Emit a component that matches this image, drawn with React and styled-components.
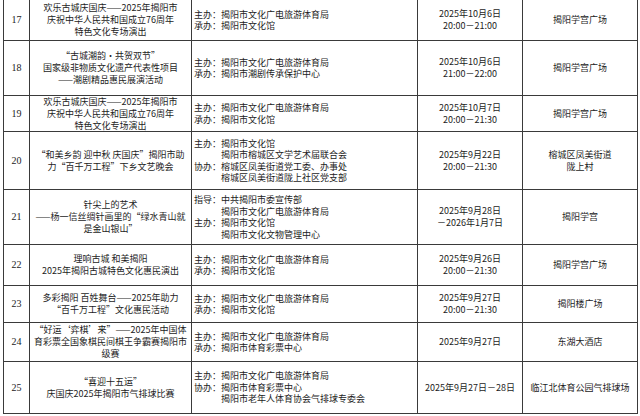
import React from 'react'
import styled, { createGlobalStyle } from 'styled-components'

const GlobalStyle = createGlobalStyle`
  html, body {
    margin: 0;
    padding: 0;
    background: #ffffff;
  }
  body {
    font-family: "Liberation Serif", "Noto Sans CJK SC", serif;
    color: #1a1a1a;
  }
`

const Page = styled.div`
  width: 640px;
  height: 416px;
  overflow: hidden;
  padding-left: 3px;
  box-sizing: border-box;
  background: #fff;
`

const Table = styled.div`
  width: 635px;
  border-left: 1px solid #3a3a3a;
  font-size: 9px;
  font-family: "Noto Sans CJK SC", sans-serif;
  color: #1c1c1c;
`

const Row = styled.div`
  display: grid;
  grid-template-columns: 26px 162px 226px 105px 115px;
  height: ${p => p.h}px;
`

const Cell = styled.div`
  box-sizing: border-box;
  border-right: 1px solid #3a3a3a;
  border-bottom: 1px solid #3a3a3a;
  display: flex;
  flex-direction: column;
  justify-content: center;
  align-items: ${p => (p.left ? 'flex-start' : 'center')};
  text-align: ${p => (p.left ? 'left' : 'center')};
  padding-left: ${p => (p.left ? '2px' : '0')};
  line-height: ${p => p.lh || 12}px;
  white-space: nowrap;
  overflow: hidden;
`

const Num = styled(Cell)`
  font-family: "Liberation Serif", serif;
  font-size: 10px;
`

const Group = styled.div`
  display: flex;
`

const Label = styled.span`
  flex: none;
`

const Names = styled.div`
  display: flex;
  flex-direction: column;
`

const Line = styled.span`
  display: block;
`

const main = ['揭阳市文化广电旅游体育局']

const rows = [
  {
    n: 17, h: 41,
    title: ['欢乐古城庆国庆——2025年揭阳市', '庆祝中华人民共和国成立76周年', '特色文化专场演出'],
    org: [['主办：', main], ['承办：', ['揭阳市文化馆']]],
    date: ['2025年10月6日', '20:00－21:00'],
    place: ['揭阳学宫广场'],
  },
  {
    n: 18, h: 55,
    title: ['“古城潮韵·共贺双节”', '国家级非物质文化遗产代表性项目', '——潮剧精品惠民展演活动'],
    org: [['主办：', main], ['承办：', ['揭阳市潮剧传承保护中心']]],
    date: ['2025年10月6日', '21:00－22:00'],
    place: ['揭阳学宫广场'],
  },
  {
    n: 19, h: 36,
    title: ['欢乐古城庆国庆——2025年揭阳市', '庆祝中华人民共和国成立76周年', '特色文化专场演出'],
    org: [['主办：', main], ['承办：', ['揭阳市文化馆']]],
    date: ['2025年10月7日', '20:00－21:30'],
    place: ['揭阳学宫广场'],
  },
  {
    n: 20, h: 58,
    title: ['“和美乡韵 迎中秋 庆国庆”揭阳市助', '力“百千万工程”下乡文艺晚会'],
    org: [
      ['主办：', ['揭阳市文化馆', '揭阳市榕城区文学艺术届联合会']],
      ['协办：', ['榕城区凤美街道党工委、办事处', '榕城区凤美街道陇上社区党支部']],
    ],
    date: ['2025年9月22日', '20:00－21:30'],
    place: ['榕城区凤美街道', '陇上村'],
  },
  {
    n: 21, h: 55,
    title: ['针尖上的艺术', '——杨一信丝绸针画里的“绿水青山就', '是金山银山”'],
    org: [
      ['指导：', ['中共揭阳市委宣传部', '揭阳市文化广电旅游体育局']],
      ['主办：', ['揭阳市文化馆', '揭阳市文化文物管理中心']],
    ],
    date: ['2025年9月28日', '－2026年1月7日'],
    place: ['揭阳学宫'],
  },
  {
    n: 22, h: 41,
    title: ['理响古城 和美揭阳', '2025年揭阳古城特色文化惠民演出'],
    org: [['主办：', main], ['承办：', ['揭阳市文化馆']]],
    date: ['2025年9月26日', '20:00－21:30'],
    place: ['揭阳学宫广场'],
  },
  {
    n: 23, h: 37,
    title: ['多彩揭阳 百姓舞台——2025年助力', '“百千万工程”文化惠民活动'],
    org: [['主办：', main], ['承办：', ['揭阳市文化馆']]],
    date: ['2025年9月27日', '20:00－21:30'],
    place: ['揭阳楼广场'],
  },
  {
    n: 24, h: 39,
    title: ['“好运‘弈棋’来”——2025年中国体', '育彩票全国象棋民间棋王争霸赛揭阳市', '级赛'],
    org: [['主办：', main], ['承办：', ['揭阳市体育彩票中心']]],
    date: ['2025年9月27日'],
    place: ['东湖大酒店'],
  },
  {
    n: 25, h: 52,
    title: ['“喜迎十五运”', '庆国庆2025年揭阳市气排球比赛'],
    org: [['主办：', main], ['协办：', ['揭阳市体育彩票中心', '揭阳市老年人体育协会气排球专委会']]],
    date: ['2025年9月27日－28日'],
    place: ['临江北体育公园气排球场'],
  },
]

export default function App() {
  return (
    <Page>
      <GlobalStyle />
      <Table>
        {rows.map(r => (
          <Row key={r.n} h={r.h}>
            <Num>{r.n}</Num>
            <Cell>
              {r.title.map((t, i) => <Line key={i}>{t}</Line>)}
            </Cell>
            <Cell left lh={11.5}>
              {r.org.map(([label, names], i) => (
                <Group key={i}>
                  <Label>{label}</Label>
                  <Names>
                    {names.map((nm, j) => <Line key={j}>{nm}</Line>)}
                  </Names>
                </Group>
              ))}
            </Cell>
            <Cell>
              {r.date.map((d, i) => <Line key={i}>{d}</Line>)}
            </Cell>
            <Cell>
              {r.place.map((p, i) => <Line key={i}>{p}</Line>)}
            </Cell>
          </Row>
        ))}
      </Table>
    </Page>
  )
}
